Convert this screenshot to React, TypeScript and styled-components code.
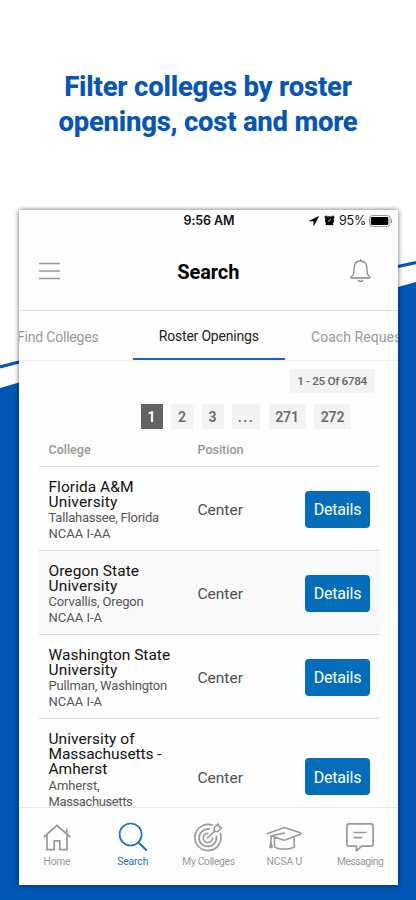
import React from "react";
import styled, { createGlobalStyle } from "styled-components";

const Global = createGlobalStyle`
  *{box-sizing:border-box}
  body{margin:0;background:#fff;font-family:Roboto,"Liberation Sans",sans-serif;}
  button{font-family:inherit}
`;

const Page = styled.div`
  position: relative; width: 416px; height: 900px; overflow: hidden; background: #fff;
  display: flex; flex-direction: column; align-items: center;
`;
const Backdrop = styled.svg`position: absolute; inset: 0;`;
const Headline = styled.h1`
  position: relative; margin: 0; height: 209.5px; padding-top: 68.5px; text-align: center;
  font: 800 27.5px/35px Roboto, sans-serif; color: #0756b4; white-space: nowrap;
`;
const Line = styled.span<{ $ls?: number }>`
  display: block; letter-spacing: ${(p) => p.$ls ?? 0}px;
`;
const Phone = styled.main`
  position: relative; width: 379px; height: 675px; margin-left: 1px; background: #fefefe;
  box-shadow: 0 0 5px rgba(0,0,0,.6); display: flex; flex-direction: column;
`;
const StatusBar = styled.div`
  height: 21px; display: grid; grid-template-columns: 1fr auto 1fr; align-items: center; padding-top: 1px;
  font: 500 12.5px/20px Inter, sans-serif; color: #111;
`;
const Clock = styled.span`grid-column: 2; letter-spacing: -.1px; font-weight: 600; padding-left: 1px;`;
const StatusRight = styled.div`
  display: flex; align-items: center; justify-content: flex-end; padding-right: 5px; font-weight: 400;
`;
const AlarmIcon = styled.svg`margin-left: 5px;`;
const Percent = styled.span`margin: 0 3px 0 4px; letter-spacing: -.2px;`;
const Header = styled.header`
  height: 80px; padding: 1px 27px 0 19.5px; display: flex; align-items: center; justify-content: space-between;
  border-bottom: 1px solid #e4e4e4;
`;
const Title = styled.h2`
  margin: 2px 0 0 7px; font-size: 20px; font-weight: 700; color: #050505; letter-spacing: -.1px;
`;
const Tabs = styled.nav`
  height: 50px; display: grid; grid-template-columns: 114px 151.5px 113.5px; overflow: hidden;
  border-bottom: 1px solid #f0f0f0; font-size: 14px; flex: none;
`;
const Tab = styled.div<{ $active?: boolean; $end?: boolean; $ls?: number }>`
  display: flex; align-items: center; white-space: nowrap; padding-top: ${(p) => (p.$active ? 4 : 3)}px;
  justify-content: ${(p) => (p.$active ? "center" : "flex-start")};
  padding-left: ${(p) => (p.$end ? 26.5 : 0)}px;
  text-indent: ${(p) => (p.$active || p.$end ? 0 : -2)}px;
  letter-spacing: ${(p) => p.$ls ?? 0}px;
  color: ${(p) => (p.$active ? "#222" : "#999")};
  border-bottom: ${(p) => (p.$active ? "2px solid #1268b8" : "0")};
`;
const Content = styled.section`
  height: 446px; overflow: hidden; padding: 8px 18.5px 0 19.5px; display: flex; flex-direction: column; flex: none;
`;
const Count = styled.div`
  align-self: flex-end; margin-right: 5px; width: 85px; height: 24.5px; background: #f3f3f3; flex: none;
  display: flex; align-items: center; justify-content: center; padding-top: 1px;
  font-size: 11.8px; font-weight: 500; letter-spacing: -.38px; color: #666;
`;
const Pager = styled.div`margin: 10.5px 0 0 102px; display: flex; gap: 8.5px; height: 25.5px; flex: none;`;
const PageButton = styled.div<{ $w: number; $active?: boolean; $ls?: number }>`
  width: ${(p) => p.$w}px; display: flex; align-items: center; justify-content: center; padding-top: 2px;
  font-size: 14px; font-weight: 600; letter-spacing: ${(p) => p.$ls ?? 0}px;
  color: ${(p) => (p.$active ? "#fff" : "#6a6a6a")}; background: ${(p) => (p.$active ? "#636363" : "#f3f3f3")};
`;
const Row = styled.div<{ $h: number; $shade?: boolean }>`
  height: ${(p) => p.$h}px; flex: none; display: grid; grid-template-columns: 149px 107.5px 1fr; align-items: center;
  padding: 0 0 0 10px; border-bottom: 1px solid #dedede; background: ${(p) => (p.$shade ? "#f9f9f9" : "transparent")};
`;
const HeadCell = styled.div`
  font-size: 12.5px; font-weight: 500; color: #999791; padding-top: 3px;
`;
const School = styled.div`align-self: start; padding-top: 12.5px; white-space: nowrap;`;
const Name = styled.div`font-size: 15.5px; line-height: 15.4px; color: #111;`;
const Detail = styled.div`font-size: 13px; line-height: 16px; color: #555;`;
const Position = styled.div`font-size: 15.5px; color: #505050; padding-top: 3px;`;
const Details = styled.button`
  width: 65px; height: 37px; margin-top: 1.5px; border: 0; border-radius: 4px; background: #036db9; color: #fff;
  font-size: 16px; letter-spacing: -.2px; padding: 1px 0 0;
`;
const TabBar = styled.footer`
  flex: 1; border-top: 1px solid #e8e8e8; display: grid; grid-template-columns: repeat(5, 75.8px); padding-top: 15px;
`;
const NavItem = styled.div<{ $active?: boolean }>`
  display: flex; flex-direction: column; align-items: center; color: ${(p) => (p.$active ? "#1773bd" : "#9b9994")};
`;
const NavLabel = styled.span<{ $ls?: number }>`
  font-size: 10.3px; line-height: 14px; margin-top: 3.5px; letter-spacing: ${(p) => p.$ls ?? 0}px; white-space: nowrap;
`;
const Icon = styled.svg`display: block; fill: none; stroke: currentColor; overflow: visible;`;

type SchoolRow = { name: [string, number][]; detail: [string, number][]; h: number };
const schools: SchoolRow[] = [
  { name: [["Florida A&M", 0.05], ["University", 0.15]], detail: [["Tallahassee, Florida", -0.2], ["NCAA I-AA", 0]], h: 84 },
  { name: [["Oregon State", 0.05], ["University", 0.15]], detail: [["Corvallis, Oregon", -0.15], ["NCAA I-A", 0]], h: 84 },
  { name: [["Washington State", 0], ["University", 0.15]], detail: [["Pullman, Washington", -0.17], ["NCAA I-A", 0]], h: 84 },
  { name: [["University of", 0.05], ["Massachusetts -", -0.07], ["Amherst", 0]], detail: [["Amherst,", -0.1], ["Massachusetts", -0.38], ["NCAA I-A", 0]], h: 115 },
];
const pages: [string, number, number][] = [["1", 22, 0], ["2", 22, 0], ["3", 22, 0], ["...", 28, 1.5], ["271", 37, -0.2], ["272", 37, -0.2]];

const HomeIcon = () => (
  <Icon width="28" height="29" viewBox="0 0 28 29" strokeWidth="1.7">
    <path d="M.8 14 14 2.5 27.2 14M4 12v14.6h7.2v-8.8h5.6v8.8H24V12M23.7 10V5.5" />
  </Icon>
);
const SearchIcon = () => (
  <Icon width="28" height="29" viewBox="0 0 28 29" strokeWidth="1.7">
    <circle cx="11.6" cy="11.5" r="11" /><path d="m19.5 19.5 8.2 8" strokeWidth="2.1" />
  </Icon>
);
const TargetIcon = () => (
  <Icon width="28" height="29" viewBox="0 0 28 29" strokeWidth="1.7" strokeLinecap="round" strokeLinejoin="round">
    <path d="M18.400 2.300A13 13 0 1 0 26.300 10.500M15.200 6.200A8.700 8.700 0 1 0 22.300 13M13.700 10.300a4.600 4.600 0 1 0 4.700 4.700M13.500 15l7.300-7" />
    <path d="M20.300 8.500V4.500l3.700-3.500.8 2.800 2.800.9-3.700 3.800Z" />
  </Icon>
);
const CapIcon = () => (
  <Icon width="36" height="29" viewBox="0 0 36 29" strokeWidth="1.6" strokeLinejoin="round" strokeLinecap="round">
    <path d="M1.3 10.7 17.6 4.7q.7-.2 1.4 0l15.4 5.1q1.2.7 0 1.4l-15.5 5.700q-1 .3-2 0L5.200 12.700l13-2.600M5 12.700v6M8.500 14.500v9.300c4 3 15.700 3 19.700 0v-9.300M4.900 19l-1 5.500h2.200z" />
  </Icon>
);
const MessageIcon = () => (
  <Icon width="28" height="29" viewBox="0 0 28 29" strokeWidth="1.7" strokeLinejoin="round">
    <path d="M3.300.9h21.400q2.400 0 2.400 2.400v17.400q0 2.400-2.400 2.400H15.700l-5.300 4.800v-4.800H3.300q-2.400 0-2.400-2.400V3.300Q.9.900 3.300.9ZM7.500 9.500h13M7.500 14.700h8.500" />
  </Icon>
);

export default function App() {
  return (
    <>
      <Global />
      <Page>
        <Backdrop width="416" height="900">
          <path d="M0 388 19 382.500 398 287 416 282V900H0Z" fill="#0056b5" />
          <path d="M0 367 19 362 398 266.500 416 262.500" stroke="#0756b4" strokeWidth="3.300" fill="none" />
        </Backdrop>
        <Headline>
          <Line $ls={-0.2}>Filter colleges by roster</Line>
          <Line $ls={-0.25}>openings, cost and more</Line>
        </Headline>
        <Phone>
          <StatusBar>
            <Clock>9:56 AM</Clock>
            <StatusRight>
              <svg width="10" height="10" viewBox="0 0 10 10"><path d="M9.700.3.300 5h4.500v4.700Z" fill="#000" stroke="#000" strokeWidth=".5" /></svg>
              <AlarmIcon width="11" height="11" viewBox="0 0 11 11">
                <circle cx="5.500" cy="5.800" r="4.500" /><path d="M.8 3 3 1M10.200 3 8 1M2 10l1.500-1.500M9 10 7.500 8.500" stroke="#000" strokeWidth="1.700" />
                <path d="M6.500 3.800 5.500 6H3.800" stroke="#fff" fill="none" strokeWidth=".7" />
              </AlarmIcon>
              <Percent>95%</Percent>
              <svg width="24" height="12" viewBox="0 0 24 12">
                <rect x=".5" y=".5" width="20.500" height="11" rx="2.800" fill="none" stroke="#999" />
                <rect x="1.800" y="2" width="17.500" height="8" rx="1.300" /><path d="M22.500 4v4" stroke="#999" />
              </svg>
            </StatusRight>
          </StatusBar>
          <Header>
            <Icon width="21" height="18" strokeWidth="1.500" color="#999"><path d="M0 1.500h21M0 9h21M0 16.500h21" /></Icon>
            <Title>Search</Title>
            <Icon width="21" height="24" viewBox="0 0 21 24" strokeWidth="1.300" color="#888">
              <path d="M1 18c2.500-2 3-3 3-8C4 5 6.500 2 10.500 2S17 5 17 10c0 5 .5 6 3 8q.3 1-1 1H2q-1.300 0-1-1ZM10.500 2V0M8 21q2.500 3 5 0" />
            </Icon>
          </Header>
          <Tabs>
            <Tab $ls={-0.2}>Find Colleges</Tab>
            <Tab $active $ls={-0.2}>Roster Openings</Tab>
            <Tab $end $ls={0.05}>Coach Requests</Tab>
          </Tabs>
          <Content>
            <Count>1 - 25 Of 6784</Count>
            <Pager>{pages.map(([t, w, l]) => <PageButton key={t} $w={w} $ls={l} $active={t === "1"}>{t}</PageButton>)}</Pager>
            <Row $h={38}><HeadCell>College</HeadCell><HeadCell>Position</HeadCell></Row>
            {schools.map((s, i) => (
              <Row key={i} $h={s.h} $shade={i === 1}>
                <School>
                  <Name>{s.name.map(([t, l]) => <Line key={t} $ls={l}>{t}</Line>)}</Name>
                  <Detail>{s.detail.map(([t, l]) => <Line key={t} $ls={l}>{t}</Line>)}</Detail>
                </School>
                <Position>Center</Position>
                <Details>Details</Details>
              </Row>
            ))}
          </Content>
          <TabBar>
            <NavItem><HomeIcon /><NavLabel $ls={-0.25}>Home</NavLabel></NavItem>
            <NavItem $active><SearchIcon /><NavLabel $ls={-0.1}>Search</NavLabel></NavItem>
            <NavItem><TargetIcon /><NavLabel $ls={-0.33}>My Colleges</NavLabel></NavItem>
            <NavItem><CapIcon /><NavLabel $ls={-0.1}>NCSA U</NavLabel></NavItem>
            <NavItem><MessageIcon /><NavLabel $ls={-0.45}>Messaging</NavLabel></NavItem>
          </TabBar>
        </Phone>
      </Page>
    </>
  );
}
